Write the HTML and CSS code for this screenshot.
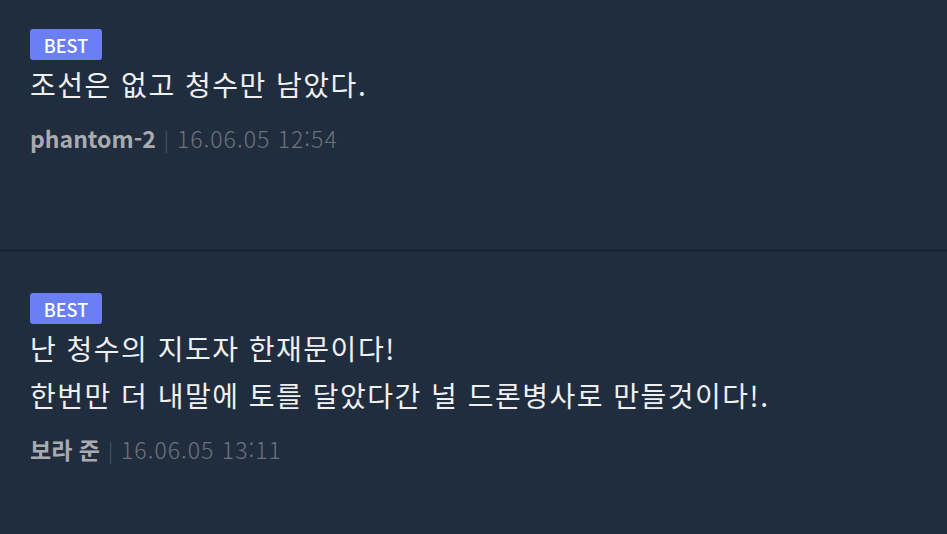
FILE: index.html
```html
<!DOCTYPE html>
<html lang="ko">
<head>
<meta charset="utf-8">
<link rel="stylesheet" href="styles.css">
</head>
<body>
<ul class="comments">
  <li class="comment">
    <span class="badge">BEST</span>
    <p class="text">조선은 없고 청수만 남았다.</p>
    <div class="meta"><span class="author">phantom-2</span><span class="sep">|</span><span class="date">16.06.05 12:54</span></div>
  </li>
  <li class="comment second">
    <span class="badge">BEST</span>
    <p class="text">난 청수의 지도자 한재문이다!<br>한번만 더 내말에 토를 달았다간 널 드론병사로 만들것이다!.</p>
    <div class="meta"><span class="author">보라 준</span><span class="sep">|</span><span class="date">16.06.05 13:11</span></div>
  </li>
</ul>
</body>
</html>
```
FILE: styles.css
```css
html, body {
  margin: 0;
  padding: 0;
  background: #1f2d3f;
  width: 947px;
  height: 534px;
  overflow: hidden;
}
body {
  font-family: "Noto Sans CJK KR", "Noto Sans", sans-serif;
}
.comments {
  list-style: none;
  margin: 0;
  padding: 0;
}
.comment {
  padding: 29px 30px 0 30px;
  height: 220px;
  display: flex;
  flex-direction: column;
  align-items: flex-start;
}
.comment.second {
  border-top: 3px solid #1a2633;
  padding-top: 41px;
}
.badge {
  display: inline-flex;
  align-items: center;
  justify-content: center;
  width: 72px;
  height: 31px;
  background: #6a7ff3;
  color: #fff;
  border-radius: 3px;
  font-size: 18px;
  font-weight: 500;
  box-sizing: border-box;
}
.text {
  margin: 1px 0 0 0;
  color: #f0f0f0;
  font-size: 28px;
  letter-spacing: 1.5px;
  line-height: 47px;
  font-weight: 400;
}
.meta {
  margin-top: 15px;
  font-size: 23px;
  line-height: 30px;
  display: flex;
  align-items: baseline;
}
.author {
  color: #a9abae;
  font-weight: 700;
}
.sep {
  color: #525a66;
  margin: 0 8px;
  font-weight: 300;
  font-size: 20px;
}
.date {
  color: #6f7379;
  font-weight: 300;
  letter-spacing: 1px;
}
```
